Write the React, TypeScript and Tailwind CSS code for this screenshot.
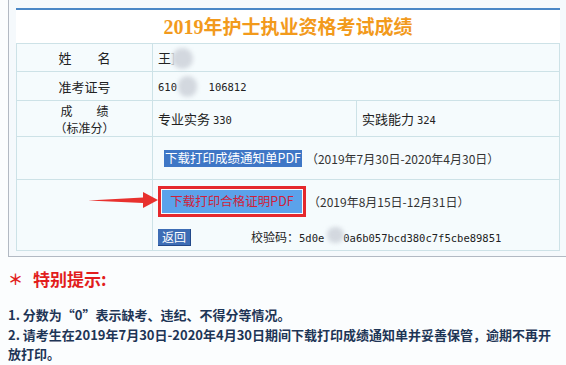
const cjk = "font-['Noto_Sans_CJK_SC',sans-serif]";

function Blob({ className }: { className: string }) {
  return (
    <span
      className={`absolute rounded-full bg-[#d3d8df] blur-[2px] ${className}`}
      aria-hidden
    />
  );
}

function Arrow() {
  return (
    <svg
      className="absolute left-[88px] top-[191px]"
      width="70"
      height="18"
      viewBox="0 0 70 18"
      aria-hidden
    >
      <path d="M0 9.5 L55 6.5 L55 1 L70 9 L55 17 L55 12 Z" fill="#e8312e" />
    </svg>
  );
}

export default function App() {
  const mono = "font-['DejaVu_Sans_Mono',monospace] text-[10.5px]";
  return (
    <div className={`relative h-[365px] w-[566px] overflow-hidden bg-[#fbfdfe] ${cjk} text-[#222]`}>
      {/* Result frame */}
      <div className="ml-[8px] h-[257px] w-[558px] border-b border-l border-[#b2b9c3] bg-[#f5f9fc] pl-[7px] pr-[6px] pt-[8px]">
        <div className="flex h-[35px] items-center justify-center border-t-2 border-[#4a87c6] bg-white pb-[1px]">
          <h1 className="text-[19px] font-bold leading-none text-[#f29a1c]">
            <span className="font-['Liberation_Serif',serif] text-[20px]">2019</span>年护士执业资格考试成绩
          </h1>
        </div>

        <table className="w-full border-collapse bg-[#f5fbfd] text-[13px] leading-none">
          <tbody>
            <tr className="h-[28px]">
              <td className="w-[136px] border border-[#cde2e7] text-center">姓　　名</td>
              <td colSpan={2} className="relative border border-[#cde2e7] pl-[5px]">
                王<span className="text-[#aaa]">]</span>
                <Blob className="left-[19px] top-[4px] h-[21px] w-[21px]" />
              </td>
            </tr>
            <tr className="h-[29px]">
              <td className="border border-[#cde2e7] text-center">准考证号</td>
              <td colSpan={2} className="relative border border-[#cde2e7] pl-[5px]">
                <span className={mono}>610&nbsp;&nbsp;&nbsp;&nbsp;&nbsp;106812</span>
                <Blob className="left-[25px] top-[4px] h-[21px] w-[19px]" />
              </td>
            </tr>
            <tr className="h-[36px]">
              <td className="border border-[#cde2e7] text-center text-[12px] leading-[17px]">
                <div>成　　绩</div>
                <div>（标准分）</div>
              </td>
              <td className="w-[204px] border border-[#cde2e7] pl-[5px]">
                专业实务 <span className={mono}>330</span>
              </td>
              <td className="border border-[#cde2e7] pl-[5px]">
                实践能力 <span className={mono}>324</span>
              </td>
            </tr>
            <tr className="h-[43px]">
              <td className="border border-[#cde2e7]" />
              <td colSpan={2} className="border border-[#cde2e7] pl-[11px]">
                <div className="flex items-center gap-[4px] pt-[1px]">
                  <span className="flex h-[17px] items-center whitespace-nowrap bg-[#3f77c6] px-[1px] text-[12.5px] text-white">
                    下载打印成绩通知单PDF
                  </span>
                  <span className="whitespace-nowrap text-[12px] text-[#333]">（2019年7月30日-2020年4月30日）</span>
                </div>
              </td>
            </tr>
            <tr className="h-[71px]">
              <td className="border border-[#cde2e7]" />
              <td colSpan={2} className="border border-[#cde2e7] pl-[5px] align-top">
                <div className="flex flex-col pt-[6px]">
                  <div className="flex items-center gap-[2px]">
                    <span className="flex h-[31px] w-[148px] items-center border-[3px] border-[#e5282c] p-[1px]">
                      <span className="flex h-full w-full items-center justify-center whitespace-nowrap bg-[#5ba2ea] text-[12.5px] text-[#cf1f3a]">
                        下载打印合格证明PDF
                      </span>
                    </span>
                    <span className="whitespace-nowrap text-[12px] text-[#333]">（2019年8月15日-12月31日）</span>
                  </div>
                  <div className="mt-[12px] flex items-center gap-[60px]">
                    <span className="flex h-[17px] w-[33px] items-center justify-center border-b border-r border-[#23498a] bg-[#3d6db5] text-[12px] text-white">
                      返回
                    </span>
                    <span className="relative text-[12px]">
                      校验码：
                      <span className={mono}>5d0e&nbsp;&nbsp;&nbsp;0a6b057bcd380c7f5cbe89851</span>
                      <Blob className="left-[76px] top-[-4px] h-[16px] w-[17px]" />
                    </span>
                  </div>
                </div>
              </td>
            </tr>
          </tbody>
        </table>
      </div>

      <Arrow />

      {/* Notes */}
      <div className="px-[8px] pt-[11px]">
        <p className="flex items-center text-[17px] font-bold leading-[22px] text-[#e21d1d]">
          <span className="mr-[10px] text-[15px]">＊</span>特别提示:
        </p>
        <div className="mt-[15px] text-[13px] font-bold leading-[19.5px] text-[#1e3556]">
          <p>1. 分数为“0”表示缺考、违纪、不得分等情况。</p>
          <p className="whitespace-nowrap">
            2. 请考生在2019年7月30日-2020年4月30日期间下载打印成绩通知单并妥善保管，逾期不再开
          </p>
          <p>放打印。</p>
        </div>
      </div>
    </div>
  );
}
